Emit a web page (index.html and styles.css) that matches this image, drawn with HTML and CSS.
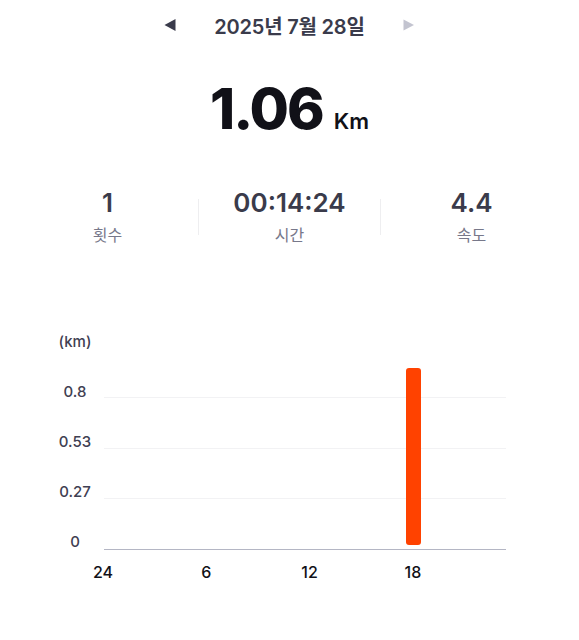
FILE: index.html
```html
<!DOCTYPE html>
<html lang="ko">
<head>
<meta charset="utf-8">
<link rel="stylesheet" href="styles.css">
</head>
<body>
<div class="page">
  <header class="datebar">
    <svg class="arrow" width="12" height="12" viewBox="0 0 12 12"><path d="M0.5 6 L11.5 0 L11.5 12 Z" fill="#3a3b4b"/></svg>
    <div class="date">2025년 7월 28일</div>
    <svg class="arrow" width="12" height="12" viewBox="0 0 12 12"><path d="M11 6 L0.5 0.5 L0.5 11.5 Z" fill="#c3c4d0"/></svg>
  </header>

  <section class="total">
    <span class="total-value">1.06</span>
    <span class="total-unit">Km</span>
  </section>

  <section class="stats">
    <div class="stat">
      <div class="stat-value">1</div>
      <div class="stat-label">횟수</div>
    </div>
    <div class="divider"></div>
    <div class="stat">
      <div class="stat-value">00:14:24</div>
      <div class="stat-label">시간</div>
    </div>
    <div class="divider"></div>
    <div class="stat">
      <div class="stat-value">4.4</div>
      <div class="stat-label">속도</div>
    </div>
  </section>

  <section class="chart">
    <div class="yaxis">
      <div class="ylabel">(km)</div>
      <div class="ylabel">0.8</div>
      <div class="ylabel">0.53</div>
      <div class="ylabel">0.27</div>
      <div class="ylabel">0</div>
    </div>
    <div class="plotcol">
      <div class="plot">
        <div class="grow"></div>
        <div class="grow"></div>
        <div class="grow"></div>
        <div class="grow base"></div>
        <div class="bar" style="left:302px; height:177px;"></div>
      </div>
      <div class="xaxis">
        <div class="xtick"><span>24</span></div>
        <div class="xtick"><span>6</span></div>
        <div class="xtick"><span>12</span></div>
        <div class="xtick"><span>18</span></div>
      </div>
    </div>
  </section>
</div>
</body>
</html>
```

FILE: styles.css
```css
* { box-sizing: border-box; }
html, body { margin: 0; padding: 0; background: #ffffff; }
body {
  font-family: Inter, "Noto Sans CJK KR", sans-serif;
  color: #3a3b4b;
  width: 579px;
  height: 640px;
  overflow: hidden;
}
.page { display: flex; flex-direction: column; }

.datebar {
  display: flex;
  align-items: center;
  justify-content: center;
  gap: 38px;
  height: 50px;
}
.arrow { display: block; }
.date {
  font-size: 20px;
  font-weight: 600;
  color: #3a3b4b;
  letter-spacing: -0.2px;
}

.total {
  display: flex;
  align-items: baseline;
  justify-content: center;
  gap: 11px;
  margin-top: 21px;
  height: 76px;
}
.total-value {
  font-size: 57px;
  font-weight: 800;
  color: #111118;
  letter-spacing: -2px;
  line-height: 76px;
}
.total-unit {
  font-size: 22px;
  font-weight: 600;
  color: #111118;
}

.stats {
  display: grid;
  grid-template-columns: 1fr 1px 1fr 1px 1fr;
  align-items: center;
  margin: 40px 17px 0;
}
.stat {
  display: flex;
  flex-direction: column;
  align-items: center;
  gap: 5px;
}
.divider {
  width: 1px;
  height: 36px;
  background: #eeeef0;
}
.stat-value {
  font-size: 26px;
  font-weight: 600;
  line-height: 32px;
  color: #3a3b4b;
}
.stat-label {
  font-size: 16px;
  line-height: 22px;
  color: #77788a;
}

.chart {
  display: flex;
  margin-top: 88px;
  margin-left: 46px;
}
.yaxis {
  width: 58px;
  display: flex;
  flex-direction: column;
  align-items: center;
  gap: 34px;
}
.ylabel {
  font-size: 15px;
  line-height: 16px;
  font-weight: 500;
  color: #3f4052;
}
.plotcol {
  width: 402px;
  padding-top: 13.3px;
}
.plot {
  position: relative;
  display: flex;
  flex-direction: column;
}
.grow {
  height: 50.67px;
  border-bottom: 1px solid #f2f2f4;
}
.grow.base { border-bottom: 1.5px solid #b4b6c4; }
.bar {
  position: absolute;
  bottom: 5px;
  width: 15px;
  background: #ff4200;
  border-radius: 3px;
}
.xaxis {
  display: flex;
  margin-top: 13px;
}
.xtick { width: 103.3px; flex-shrink: 0; }
.xtick span {
  display: block;
  width: 40px;
  margin-left: -21px;
  text-align: center;
  font-size: 16px;
  font-weight: 500;
  line-height: 18px;
  color: #111118;
}
```
